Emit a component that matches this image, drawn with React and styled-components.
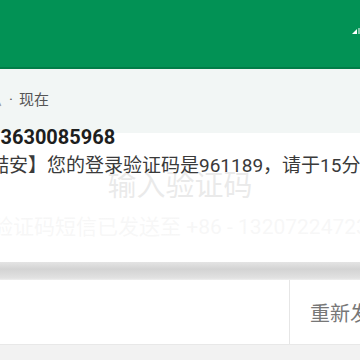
import React from "react";
import styled, { createGlobalStyle } from "styled-components";

const GlobalStyle = createGlobalStyle`
  html, body { margin: 0; padding: 0; background: #ffffff; }
  body { font-family: Roboto, "Noto Sans CJK SC", sans-serif; }
`;

const Screen = styled.div`
  position: relative;
  width: 360px;
  height: 360px;
  overflow: hidden;
  display: flex;
  flex-direction: column;
  background: #ffffff;
`;

const Header = styled.header`
  flex: none;
  height: 39px;
  padding-top: 28px;
  background: #029255;
  border-bottom: 2px solid #017d48;
  display: flex;
  justify-content: flex-end;
  align-items: flex-start;
`;

const Content = styled.section`
  height: 193px;
  flex: none;
  display: flex;
  flex-direction: column;
  align-items: center;
  padding-top: 100px;
  box-sizing: border-box;
  overflow: hidden;
`;

const Title = styled.h1`
  margin: 0;
  font-size: 29px;
  line-height: 34px;
  font-weight: 400;
  color: #555555;
  white-space: nowrap;
`;

const Subtitle = styled.p`
  margin: 12px 0 0;
  font-size: 21px;
  line-height: 24px;
  color: #bbbbbb;
  white-space: nowrap;
`;

const ShadowGap = styled.div`
  height: 18px;
  flex: none;
  background: linear-gradient(#e4e4e4, #d3d3d3 40%, #e2e2e2 90%, #efefef);
`;

const InputRow = styled.div`
  height: 64px;
  flex: none;
  display: flex;
  background: #ffffff;
  border-bottom: 1px solid #e8e8e8;
`;

const CodeInput = styled.div`
  width: 289px;
  flex: none;
`;

const ResendButton = styled.div`
  flex: 1;
  border-left: 1px solid #e6e6e6;
  padding-left: 20px;
  display: flex;
  align-items: center;
  font-size: 20px;
  color: #777777;
  white-space: nowrap;
  overflow: hidden;
`;

const Footer = styled.div`
  flex: 1;
  background: #f2f2f2;
`;

const Notification = styled.div`
  position: absolute;
  top: 69px;
  left: 0;
  right: 0;
  height: 193px;
  background: linear-gradient(#f2f6f5 64px, rgba(255, 255, 255, 0.88) 64px);
  display: flex;
  flex-direction: column;
  padding-top: 21px;
  box-sizing: border-box;
  overflow: hidden;
`;

const NotifMeta = styled.div`
  display: flex;
  align-items: center;
  margin-left: -28px;
  font-size: 15px;
  line-height: 20px;
  color: #555555;
  white-space: nowrap;
`;

const AppName = styled.span`
  color: #9a9a9a;
`;

const Dot = styled.span`
  margin: 0 6px 0 7px;
`;

const Sender = styled.div`
  margin: 15px 0 0 -11px;
  font-size: 20px;
  line-height: 24px;
  font-weight: 700;
  color: #1e1e1e;
  white-space: nowrap;
`;

const Message = styled.div`
  margin: 5px 0 0 -29px;
  font-size: 19px;
  line-height: 24px;
  color: #3a3a3a;
  white-space: nowrap;
`;

const Signal = () => (
  <svg width="8" height="6" viewBox="0 0 8 6">
    <polygon points="0,6 5,1 5,6" fill="#ffffff" />
    <polygon points="6,0 8,0 8,6 6,6" fill="#ffffff" opacity="0.5" />
  </svg>
);

export default function App() {
  return (
    <>
      <GlobalStyle />
      <Screen>
        <Header>
          <Signal />
        </Header>
        <Content>
          <Title>输入验证码</Title>
          <Subtitle>验证码短信已发送至 +86 - 13207224723</Subtitle>
        </Content>
        <ShadowGap />
        <InputRow>
          <CodeInput />
          <ResendButton>重新发送</ResendButton>
        </InputRow>
        <Footer />
        <Notification>
          <NotifMeta>
            <AppName>信息</AppName>
            <Dot>·</Dot>
            <span>现在</span>
          </NotifMeta>
          <Sender>13630085968</Sender>
          <Message>【喆安】您的登录验证码是961189，请于15分钟内填写。</Message>
        </Notification>
      </Screen>
    </>
  );
}
